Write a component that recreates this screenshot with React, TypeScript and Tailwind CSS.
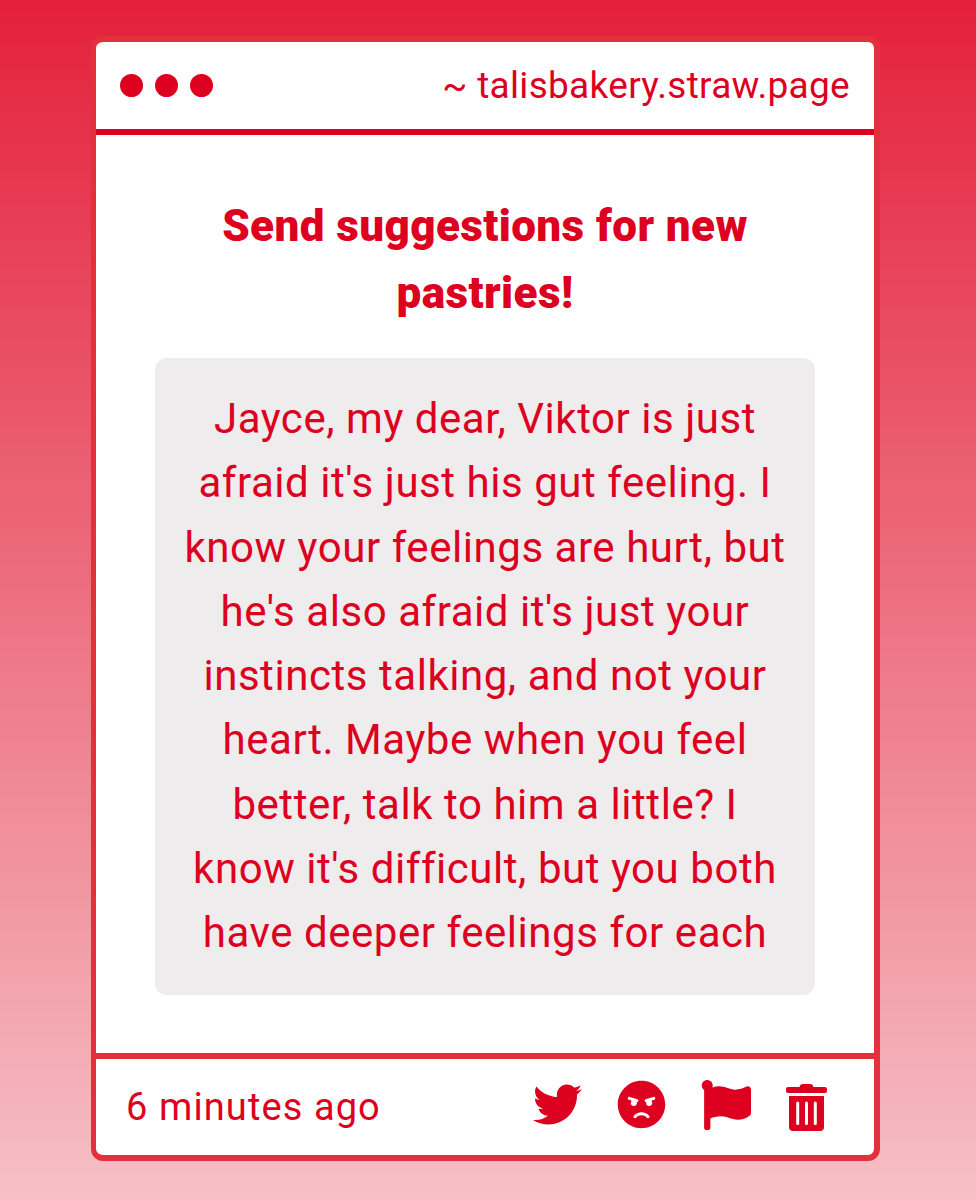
import React from "react";
import { FaTwitter, FaAngry, FaFlag } from "react-icons/fa";

type Props = {
  site: string;
  heading: string;
  message: string;
  time: string;
};

const TrashIcon = () => (
  <svg viewBox="0 0 41 47" className="w-[41px] h-[47px]" fill="currentColor">
    <path d="M2 3h11.500c.4-2 1.500-3 3.500-3h7c2 0 3.100 1 3.500 3H39a2 2 0 0 1 2 2v2a2 2 0 0 1-2 2H2a2 2 0 0 1-2-2V5a2 2 0 0 1 2-2Z" />
    <path
      fillRule="evenodd"
      d="M3 12h35v31a4 4 0 0 1-4 4H7a4 4 0 0 1-4-4Zm7.200 7v20.500a1.500 1.500 0 0 0 3 0V19a1.500 1.500 0 0 0-3 0Zm8.800 0v20.500a1.500 1.500 0 0 0 3 0V19a1.500 1.500 0 0 0-3 0Zm8.800 0v20.500a1.500 1.500 0 0 0 3 0V19a1.500 1.500 0 0 0-3 0Z"
    />
  </svg>
);

export const MessageCard = ({ site, heading, message, time }: Props) => {
  return (
    <article className="flex flex-col w-[789px] h-[1125px] rounded-xl border-6 border-l-5 border-[#e3313c] bg-white">
      <header className="flex items-center justify-between h-[93px] shrink-0 border-b-6 border-[#dd001f] px-6">
        <div className="flex gap-3">
          <span className="size-[23px] rounded-full bg-[#dd001f]" />
          <span className="size-[23px] rounded-full bg-[#dd001f]" />
          <span className="size-[23px] rounded-full bg-[#dd001f]" />
        </div>
        <p className="text-[37px] tracking-[0.3px]">{site}</p>
      </header>
      <div className="flex flex-1 flex-col px-[59px] pt-[58px]">
        <h1 className="px-10 text-center text-[44px] leading-[67px] font-black tracking-[0.4px]">
          {heading}
        </h1>
        <p className="mt-[31px] h-[637px] rounded-xl bg-[#eeecec] px-[22px] pt-[29px] text-center text-[42px] leading-[64.3px] tracking-[0.55px]">
          {message}
        </p>
      </div>
      <footer className="flex items-center h-[102px] shrink-0 border-t-6 border-[#e3313c] pl-[30px] pr-[47px]">
        <p className="flex-1 text-[38px] tracking-[1.1px]">{time}</p>
        <div className="flex items-start">
          <FaTwitter className="-mt-1 size-[49px]" />
          <FaAngry className="-mt-1 ml-[35px] size-[49px]" />
          <FaFlag className="-mt-1 ml-[35px] size-[50px]" />
          <div className="ml-[35px]">
            <TrashIcon />
          </div>
        </div>
      </footer>
    </article>
  );
};

export default function App() {
  return (
    <main className="flex h-[1200px] justify-center bg-linear-to-b/srgb from-[#e4203b] to-[#f6c0c6] pt-9 pr-[5px] font-['Roboto',sans-serif] text-[#dd001f]">
      <MessageCard
        site="~ talisbakery.straw.page"
        heading="Send suggestions for new pastries!"
        message="Jayce, my dear, Viktor is just afraid it's just his gut feeling. I know your feelings are hurt, but he's also afraid it's just your instincts talking, and not your heart. Maybe when you feel better, talk to him a little? I know it's difficult, but you both have deeper feelings for each"
        time="6 minutes ago"
      />
    </main>
  );
}
